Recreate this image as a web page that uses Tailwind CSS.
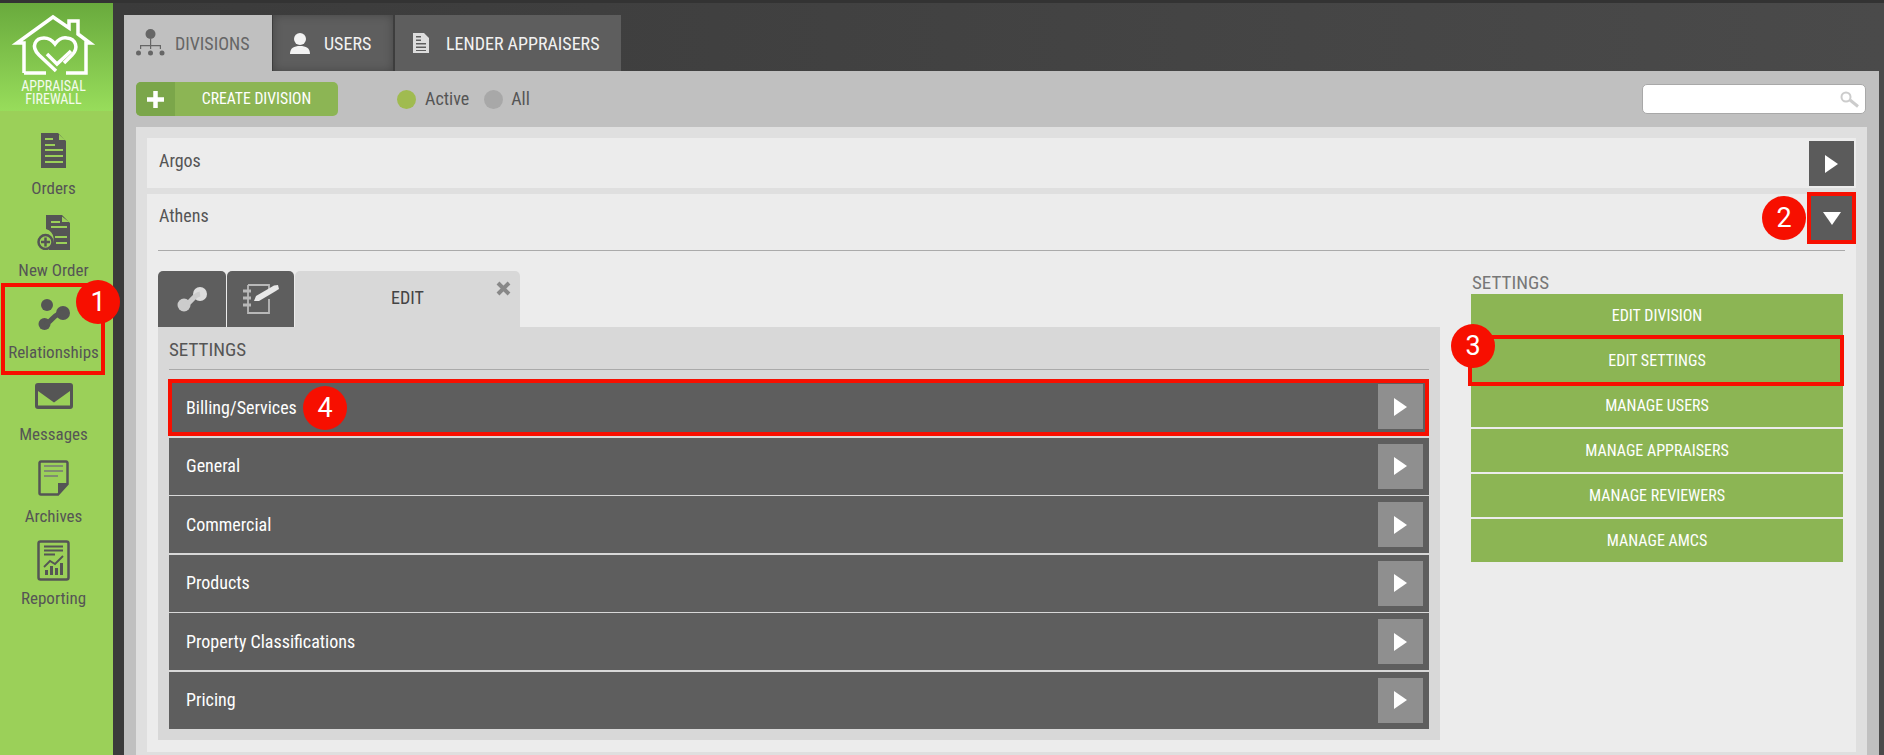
<!DOCTYPE html>
<html><head><meta charset="utf-8"><title>Divisions</title>
<script src="https://cdn.jsdelivr.net/npm/@tailwindcss/browser@4"></script></head>
<body class="m-0 overflow-hidden">
<div class="relative w-[1884px] h-[755px] overflow-hidden flex bg-gradient-to-r from-[#3a3a3a] to-[#4a4a4a] border-t-[3px] border-[#333333] [font-family:Roboto,sans-serif] [font-stretch:75%] text-[18px] text-[#555]">

<!-- sidebar -->
<aside class="relative z-10 w-[113px] h-full bg-[#9bd059] shrink-0 flex flex-col">
  <div class="h-[108px] pr-[6px] bg-gradient-to-b from-[#69aa3d] to-[#98dd5b] flex flex-col items-center">
    <svg class="mt-[9px] shrink-0" width="90" height="66" viewBox="9 11 90 66" fill="none" stroke="#fff" stroke-width="3.500"><path d="M24 72V42H17L53 16L69 27V20H78V33L90 42H86V72H66M46 72H24"/><path d="M56 70L39 54C30 45 36 37 44 37C49 37 52 39 55 43C58 39 62 36 67 37C76 38 79 47 72 54L64 62"/><path d="M47 53L57 63L71 50"/></svg>
    <div class="text-white/90 text-[14px] leading-[13px] text-center mt-[2px]">APPRAISAL<br>FIREWALL</div>
  </div>
  <nav class="pt-[11px] pr-[6px] flex flex-col text-[17px]">
    <a class="h-[82px] flex flex-col items-center"><span class="h-[56px] flex items-center"><svg width="26" height="35" viewBox="0 0 26 35"><path fill="#555" fill-rule="evenodd" d="M0 0H17L25 8V35H0ZM4 11V13H14V11ZM4 5V7H12V5ZM4 16V18H22V16ZM4 22V24H22V22ZM4 28V30H22V28ZM18 1.500V7H24Z"/></svg></span><span class="h-5 leading-5 whitespace-nowrap">Orders</span></a>
    <a class="h-[82px] flex flex-col items-center"><span class="h-[56px] flex items-center"><svg width="34" height="35" viewBox="0 0 34 35"><path fill="#555" fill-rule="evenodd" d="M9 0H25L33 8V35H12V33.500A11 11 0 0 0 9 14ZM14 6V8H23V6ZM14 11V13H30V11ZM18 21V23H30V21ZM19 27V29H30V27ZM25 1.500V7H32Z"/><circle cx="8.500" cy="27" r="7" fill="none" stroke="#555" stroke-width="2.500"/><path d="M8.500 22.500V31.500M4 27H13" stroke="#555" stroke-width="2.500"/></svg></span><span class="h-5 leading-5 whitespace-nowrap">New Order</span></a>
    <a class="h-[82px] flex flex-col items-center"><span class="h-[56px] flex items-center"><svg width="32" height="31" viewBox="0 0 32 31"><circle cx="9" cy="6" r="6" fill="#555"/><circle cx="25" cy="14" r="7" fill="#555"/><circle cx="6.500" cy="25" r="6" fill="#555"/><path d="M6.500 25C14 24 15 14 25 14" stroke="#555" stroke-width="5" fill="none"/></svg></span><span class="h-5 leading-5 whitespace-nowrap">Relationships</span></a>
    <a class="h-[82px] flex flex-col items-center"><span class="h-[56px] flex items-center"><svg width="38" height="26" viewBox="0 0 38 26"><rect width="38" height="26" rx="3" fill="#555"/><path d="M3 8L19 19.500L35 8V22.500H3Z" fill="#9bd059"/></svg></span><span class="h-5 leading-5 whitespace-nowrap">Messages</span></a>
    <a class="h-[82px] flex flex-col items-center"><span class="h-[56px] flex items-center"><svg width="31" height="36" viewBox="0 0 31 36"><path d="M3 1.500H28A1.500 1.500 0 0 1 29.500 3V24L20 34.500H3A1.500 1.500 0 0 1 1.500 33V3A1.500 1.500 0 0 1 3 1.500Z" fill="none" stroke="#555" stroke-width="2.500"/><path d="M6 6H25M6 11H25M6 16H20" stroke="#777" stroke-width="1.500"/><path d="M30 23H20V34Z" fill="#555"/></svg></span><span class="h-5 leading-5 whitespace-nowrap">Archives</span></a>
    <a class="h-[82px] flex flex-col items-center"><span class="h-[56px] flex items-center"><svg width="33" height="41" viewBox="0 0 33 41"><rect x="1.500" y="1.500" width="30" height="38" rx="2" fill="none" stroke="#555" stroke-width="2.500"/><path d="M7 6.500H26M7 10.500H26M7 14.500H18" stroke="#555" stroke-width="1.800"/><path d="M7 27L13 21L18 24L26 16" stroke="#555" stroke-width="1.800" fill="none"/><path d="M8 30h3v5H8zM13 26h3v9h-3zM18 28h3v7h-3zM23 23h3v12h-3z" fill="#555"/></svg></span><span class="h-5 leading-5 whitespace-nowrap">Reporting</span></a>
  </nav>
  <div class="absolute left-[1px] top-[280px] w-[104px] h-[92px] border-[4px] border-[#f70f00]"></div>
  <div class="absolute left-[76px] top-[277px] w-[44px] h-[44px] rounded-full bg-[#f70f00] text-white text-[27px] [font-stretch:100%] flex items-center justify-center">1</div>
</aside>

<!-- main -->
<main class="ml-[11px] mt-[12px] w-[1755px] flex flex-col">
  <div class="flex h-[56px]">
    <div class="w-[148px] bg-[#c0c0c0] flex items-center pl-[12px] gap-[10px] text-[#666] text-[18px]">
      <svg class="shrink-0" width="29" height="28" viewBox="0 0 29 28" fill="#666"><circle cx="14.500" cy="5" r="5"/><path d="M14 10h1.200v6H25v4h-1.200v-2.800H15.200V20H14v-2.800H5.200V20H4v-4h10z"/><circle cx="2.500" cy="24" r="2.500"/><circle cx="14.500" cy="24" r="2.500"/><circle cx="26" cy="24" r="2.500"/></svg>
      <span>DIVISIONS</span>
    </div>
    <div class="ml-[1px] w-[120px] bg-[#5e5e5e] shadow-[inset_0_0_10px_rgba(0,0,0,0.25)] flex items-center pl-[17px] gap-[14px] text-[#f2f2f2] text-[18px]">
      <svg class="shrink-0" width="20" height="21" viewBox="0 0 20 21" fill="#f2f2f2"><circle cx="10" cy="6" r="6"/><path d="M0 21C0 15 4 13 10 13S20 15 20 21Z"/></svg>
      <span>USERS</span>
    </div>
    <div class="ml-[2px] w-[226px] bg-[#5e5e5e] flex items-center pl-[18px] gap-[17px] text-[#f2f2f2] text-[18px]">
      <svg class="shrink-0" width="16" height="20" viewBox="0 0 16 20"><path fill="#ddd" fill-rule="evenodd" d="M0 0H11L16 5V20H0ZM3 3V4.500H8V3ZM3 6.500V8H8V6.500ZM3 10V11.500H13V10ZM3 13.500V15H13V13.500ZM3 17V18H13V17Z"/></svg>
      <span class="whitespace-nowrap">LENDER APPRAISERS</span>
    </div>
  </div>

  <div class="flex-1 bg-[#c0c0c0] pl-[12px] pr-[12px] flex flex-col">
    <div class="h-[56px] shrink-0 flex items-center">
      <div class="w-[202px] h-[34px] rounded-[5px] overflow-hidden flex bg-[#8cb554] text-white text-[15.700px]">
        <span class="w-[39px] bg-[#7ba64a] flex items-center justify-center"><svg width="17" height="17" viewBox="0 0 17 17"><path d="M8.500 0V17M0 8.500H17" stroke="#fff" stroke-width="4.500"/></svg></span>
        <span class="flex-1 flex items-center justify-center"><span class="whitespace-nowrap">CREATE DIVISION</span></span>
      </div>
      <span class="ml-[59px] w-[19px] h-[19px] rounded-full bg-[#a0bb50]"></span>
      <span class="ml-[9px] text-[18px] text-[#555] -mt-[2px]">Active</span>
      <span class="ml-[15px] w-[19px] h-[19px] rounded-full bg-[#a8a8a8]"></span>
      <span class="ml-[8px] text-[18px] text-[#555] -mt-[2px]">All</span>
      <div class="ml-auto mr-[1px] w-[224px] h-[30px] bg-white rounded-[5px] border border-[#a8a8a8] flex items-center justify-end pr-[5px]">
        <svg width="21" height="17" viewBox="0 0 21 17" fill="none" stroke="#ccc"><circle cx="7" cy="6" r="4.500" stroke-width="2"/><path d="M11 9L19 15.500" stroke-width="3"/></svg>
      </div>
    </div>

    <div class="flex-1 bg-[#dfdfdf] pt-[11px] px-[11px] flex flex-col gap-[6px]">
      <div class="h-[50px] bg-[#ececec] shrink-0 flex items-start justify-between pl-[12px] pr-[2px] pt-[3px]">
        <span class="text-[#555] text-[18px] leading-[40px]">Argos</span>
        <span class="w-[45px] h-[45px] bg-[#5b5b5b] flex items-center justify-center"><svg width="13" height="18" viewBox="0 0 13 18"><path d="M0 0L13 9L0 18Z" fill="#fff"/></svg></span>
      </div>

      <div class="relative h-[558px] shrink-0 bg-[#ececec] px-[11px]">
        <div class="relative h-[57px] border-b border-[#aaa] flex justify-between">
          <span class="pl-px text-[#555] text-[18px] leading-[44px]">Athens</span>
          <span class="relative mr-[-11px] w-[49px] h-[52px] -mt-[2px] bg-[#5b5b5b] border-[4px] border-[#f70f00] flex items-center justify-center"><svg width="18" height="13" viewBox="0 0 18 13"><path d="M0 0H18L9 13Z" fill="#fff"/></svg>
            <span class="absolute -left-[49px] top-[0px] w-[44px] h-[44px] rounded-full bg-[#f70f00] text-white text-[27px] [font-stretch:100%] flex items-center justify-center">2</span>
          </span>
        </div>
        <div class="flex">
          <div class="relative w-[1282px] mt-[20px] shrink-0">
            <div class="flex h-[56px]">
              <div class="w-[68px] bg-[#5e5e5e] rounded-t-[5px] flex items-center justify-center"><svg width="32" height="26" viewBox="0 0 32 26"><circle cx="24" cy="8" r="7" fill="#ddd"/><circle cx="8" cy="19" r="6.500" fill="#ccc"/><path d="M8 19C15 18 17 9 24 8" stroke="#ccc" stroke-width="5" fill="none"/></svg></div>
              <div class="ml-[1px] w-[67px] bg-[#5e5e5e] rounded-t-[5px] flex items-center justify-center"><svg width="38" height="32" viewBox="0 0 38 32" fill="none" stroke="#b8b8b8"><path d="M6 2H27V8M27 16V30H6V2" stroke-width="1.800"/><path d="M1 8H9M1 15H9M1 22H9" stroke-width="3"/><path d="M12 18L14 13L32 2.500L36 2L37 6L33 8.500L17 18Z" fill="#e8e8e8" stroke="none"/></svg></div>
              <div class="relative ml-[1px] w-[225px] bg-[#d8d8d8] rounded-t-[5px] flex items-center justify-center text-[#444] text-[18px] pb-[4px]"><span>EDIT</span>
                <svg class="absolute right-[9px] top-[10px]" width="15" height="15" viewBox="0 0 15 15"><path d="M2 2L13 13M13 2L2 13" stroke="#888" stroke-width="4"/></svg>
              </div>
            </div>
            <div class="bg-[#d8d8d8] h-[413px] px-[11px] flex flex-col">
              <div class="h-[43px] shrink-0 border-b border-[#aaa] flex items-center pt-[4px] text-[#555] text-[19px]">SETTINGS</div>
              <div class="pt-[9px] flex flex-col gap-[1.500px]">
                <div class="relative h-[57px] bg-[#5e5e5e] flex items-center justify-between pl-[17px] pr-[6px] text-white text-[18px]">
                  <span>Billing/Services</span>
                  <span class="w-[45px] h-[45px] bg-[#8f8f8f] flex items-center justify-center -mt-[2px]"><svg width="13" height="18" viewBox="0 0 13 18"><path d="M0 0L13 9L0 18Z" fill="#fff"/></svg></span>
                  <div class="absolute -left-[1px] top-0 w-[1261px] h-[57px] border-[4px] border-[#f70f00]"></div>
                  <div class="absolute left-[134px] top-[7px] w-[44px] h-[44px] rounded-full bg-[#f70f00] text-white text-[27px] [font-stretch:100%] flex items-center justify-center">4</div>
                </div>
                <div class="h-[57px] bg-[#5e5e5e] flex items-center justify-between pl-[17px] pr-[6px] text-white text-[18px]"><span class="-mt-[2px]">General</span><span class="w-[45px] h-[45px] bg-[#8f8f8f] flex items-center justify-center"><svg width="13" height="18" viewBox="0 0 13 18"><path d="M0 0L13 9L0 18Z" fill="#fff"/></svg></span></div>
                <div class="h-[57px] bg-[#5e5e5e] flex items-center justify-between pl-[17px] pr-[6px] text-white text-[18px]"><span>Commercial</span><span class="w-[45px] h-[45px] bg-[#8f8f8f] flex items-center justify-center"><svg width="13" height="18" viewBox="0 0 13 18"><path d="M0 0L13 9L0 18Z" fill="#fff"/></svg></span></div>
                <div class="h-[57px] bg-[#5e5e5e] flex items-center justify-between pl-[17px] pr-[6px] text-white text-[18px]"><span class="-mt-[2px]">Products</span><span class="w-[45px] h-[45px] bg-[#8f8f8f] flex items-center justify-center"><svg width="13" height="18" viewBox="0 0 13 18"><path d="M0 0L13 9L0 18Z" fill="#fff"/></svg></span></div>
                <div class="h-[57px] bg-[#5e5e5e] flex items-center justify-between pl-[17px] pr-[6px] text-white text-[18px]"><span>Property Classifications</span><span class="w-[45px] h-[45px] bg-[#8f8f8f] flex items-center justify-center"><svg width="13" height="18" viewBox="0 0 13 18"><path d="M0 0L13 9L0 18Z" fill="#fff"/></svg></span></div>
                <div class="h-[57px] bg-[#5e5e5e] flex items-center justify-between pl-[17px] pr-[6px] text-white text-[18px]"><span class="-mt-[2px]">Pricing</span><span class="w-[45px] h-[45px] bg-[#8f8f8f] flex items-center justify-center"><svg width="13" height="18" viewBox="0 0 13 18"><path d="M0 0L13 9L0 18Z" fill="#fff"/></svg></span></div>
              </div>
            </div>
          </div>
          <div class="ml-[31px] w-[372px] shrink-0">
            <div class="h-[43px] pl-px pt-[21px] text-[#777] text-[19px] leading-[22px]">SETTINGS</div>
            <div class="flex flex-col gap-[2px] text-white text-[16px] text-center">
              <div class="h-[43px] bg-[#8cb554] flex items-center justify-center"><span>EDIT DIVISION</span></div>
              <div class="relative h-[43px] bg-[#8cb554] flex items-center justify-center"><span>EDIT SETTINGS</span>
                <div class="absolute -left-[3px] -top-[4px] w-[376px] h-[51px] border-[4px] border-[#f70f00]"></div>
                <div class="absolute -left-[20px] -top-[15px] w-[44px] h-[44px] rounded-full bg-[#f70f00] text-[27px] [font-stretch:100%] flex items-center justify-center">3</div>
              </div>
              <div class="h-[43px] bg-[#8cb554] flex items-center justify-center"><span>MANAGE USERS</span></div>
              <div class="h-[43px] bg-[#8cb554] flex items-center justify-center"><span>MANAGE APPRAISERS</span></div>
              <div class="h-[43px] bg-[#8cb554] flex items-center justify-center"><span>MANAGE REVIEWERS</span></div>
              <div class="h-[43px] bg-[#8cb554] flex items-center justify-center"><span>MANAGE AMCS</span></div>
            </div>
          </div>
        </div>
      </div>
    </div>
  </div>
</main>
</div>
</body></html>
